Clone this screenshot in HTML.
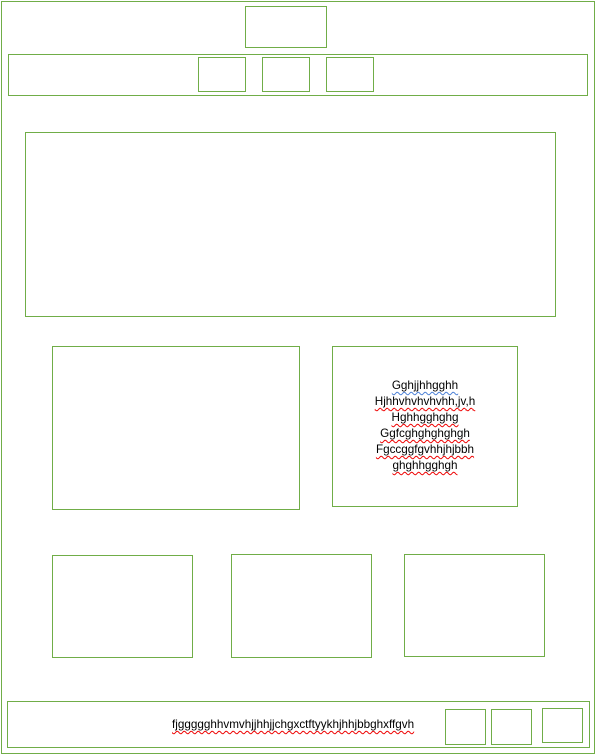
<!DOCTYPE html>
<html><head><meta charset="utf-8"><style>
body{margin:0;width:595px;height:754px;position:relative;background:#fff;font-family:"Liberation Sans",sans-serif;overflow:hidden}
.b{position:absolute;border:1px solid #70ad47;box-sizing:border-box}
.t{position:absolute;font-size:11.7px;color:#000;text-align:center;line-height:16px}
.t span{text-decoration:underline wavy #e00;text-decoration-thickness:1px;text-underline-offset:2px}
</style></head><body>
<div class="b" style="left:1px;top:1px;width:594px;height:753px"></div>
<div class="b" style="left:245px;top:6px;width:82px;height:42px"></div>
<div class="b" style="left:8px;top:54px;width:580px;height:42px"></div>
<div class="b" style="left:198px;top:57px;width:48px;height:35px"></div>
<div class="b" style="left:262px;top:57px;width:48px;height:35px"></div>
<div class="b" style="left:326px;top:57px;width:48px;height:35px"></div>
<div class="b" style="left:25px;top:132px;width:531px;height:185px"></div>
<div class="b" style="left:52px;top:346px;width:248px;height:164px"></div>
<div class="b" style="left:332px;top:346px;width:186px;height:161px"></div>
<div class="t" style="left:332px;top:378px;width:186px">
<span style="text-decoration-color:#4a7fd6">Gghjjhhgghh</span><br><span>Hjhhvhvhvhvhh,jv,h</span><br><span>Hghhgghghg</span><br><span>Ggfcghghghghgh</span><br><span>Fgccggfgvhhjhjbbh</span><br><span>ghghhgghgh</span></div>
<div class="b" style="left:52px;top:555px;width:141px;height:103px"></div>
<div class="b" style="left:231px;top:554px;width:141px;height:104px"></div>
<div class="b" style="left:404px;top:554px;width:141px;height:103px"></div>
<div class="b" style="left:7px;top:701px;width:583px;height:47px"></div>
<div class="t" style="left:172px;top:717px;text-align:left"><span>fjggggghhvmvhjjhhjjchgxctftyykhjhhjbbghxffgvh</span></div>
<div class="b" style="left:445px;top:709px;width:41px;height:36px"></div>
<div class="b" style="left:491px;top:709px;width:41px;height:36px"></div>
<div class="b" style="left:542px;top:708px;width:41px;height:35px"></div>
</body></html>
